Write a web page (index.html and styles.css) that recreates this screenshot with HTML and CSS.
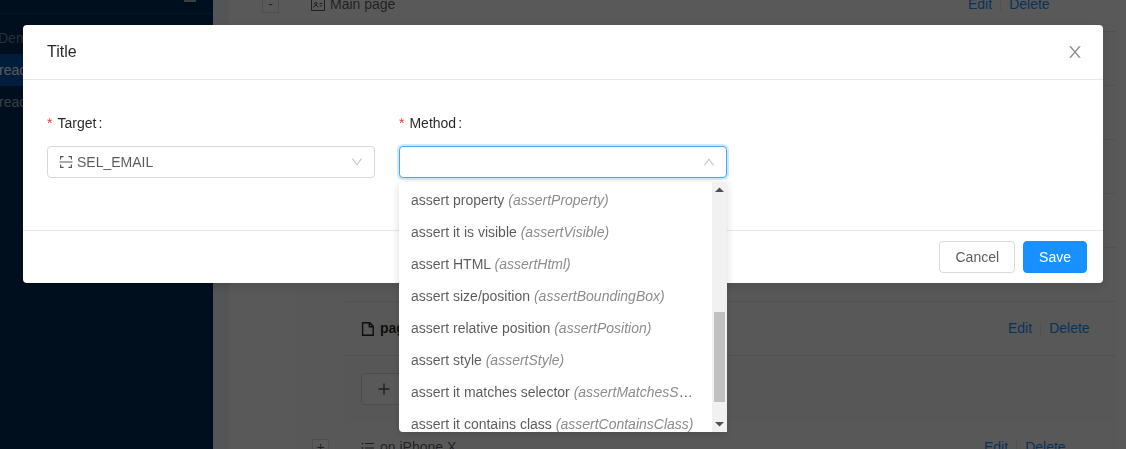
FILE: index.html
```html
<!DOCTYPE html>
<html lang="en">
<head>
<meta charset="utf-8">
<title>Title</title>
<link rel="stylesheet" href="styles.css">
</head>
<body>
<div class="app">
  <aside class="sider">
    <div class="sider-head">
      <span>g</span>
      <svg class="icon" viewBox="0 0 14 14"><path d="M2 2h10v10H2z" fill="none" stroke="currentColor" stroke-width="2"/></svg>
    </div>
    <nav class="menu">
      <span class="menu-group">Demo</span>
      <a class="menu-item active" href="#">react</a>
      <a class="menu-item" href="#">react</a>
    </nav>
  </aside>
  <main class="content">
    <div class="card">
      <div class="row">
        <div class="expand"><button class="toggle" type="button" aria-label="Collapse">-</button></div>
        <div class="name">
          <svg class="icon" viewBox="0 0 14 14" fill="none" stroke="currentColor"><path d="M.5 1.500h13v11H.5z"/><circle cx="4.800" cy="5.500" r="1.200"/><path d="M2.500 9.500c.3-2.600 4.300-2.600 4.600 0M8.500 5.500h3M8.500 8h2.500"/></svg>
          <span>Main page</span>
        </div>
        <div class="actions level-1"><a href="#">Edit</a><i class="divider"></i><a href="#">Delete</a></div>
      </div>
      <div class="nested">
        <div class="row"></div>
        <div class="row"></div>
        <div class="row"></div>
        <div class="row"></div>
        <div class="nested">
          <div class="row"></div>
          <div class="row">
            <div class="name">
              <svg class="icon file" viewBox="0 0 14 14" fill="none" stroke="currentColor" stroke-width="1.400"><path d="M1.600.800h7l3.600 3.600v8.800H1.600zM8.300.800v4h4"/></svg>
              <b>page</b>
            </div>
            <div class="actions level-3"><a href="#">Edit</a><i class="divider"></i><a href="#">Delete</a></div>
          </div>
          <div class="add-row">
            <button class="add" type="button" aria-label="Add">
              <svg class="icon" viewBox="0 0 14 14" fill="none" stroke="currentColor" stroke-width="1.400"><path d="M7 1.500v11M1.500 7h11"/></svg>
            </button>
          </div>
        </div>
        <div class="row row-last">
          <div class="expand"><button class="toggle" type="button" aria-label="Expand">+</button></div>
          <div class="name">
            <svg class="icon" viewBox="0 0 14 14" fill="none" stroke="currentColor"><path d="M4 2.500h9M4 7h9M4 11.500h9"/><path d="M.800 2.500h1.400M.800 7h1.400M.800 11.500h1.400" stroke-width="1.400"/></svg>
            <span>on iPhone X</span>
          </div>
          <div class="actions level-2"><a href="#">Edit</a><i class="divider"></i><a href="#">Delete</a></div>
        </div>
      </div>
    </div>
  </main>
</div>

<div class="mask">
  <form class="modal" role="dialog" aria-labelledby="modal-title">
    <header class="modal-head">
      <h1 id="modal-title">Title</h1>
      <button class="close" type="button" aria-label="Close">
        <svg viewBox="64 64 896 896" width="16" height="16" fill="currentColor"><path d="M563.8 512l262.5-312.9c4.4-5.2.7-13.1-6.1-13.1h-79.8c-4.700 0-9.200 2.100-12.300 5.700L511.600 449.800 295.100 191.700c-3-3.600-7.500-5.700-12.300-5.700H203c-6.800 0-10.500 7.900-6.100 13.100L459.400 512 196.900 824.900A7.950 7.950 0 0 0 203 838h79.800c4.700 0 9.200-2.100 12.300-5.700l216.500-258.100 216.500 258.100c3 3.600 7.500 5.700 12.300 5.700h79.800c6.800 0 10.500-7.900 6.100-13.100L563.800 512z"/></svg>
      </button>
    </header>
    <div class="modal-body">
      <div class="field">
        <label for="target">Target</label>
        <div class="select-box">
          <svg class="icon prefix" viewBox="0 0 14 14" fill="none" stroke="currentColor" stroke-width="1.200"><path d="M1.600 4.500V1.600h3M9.400 1.600h3v2.900M1.600 9.500v2.900h3M9.400 12.400h3V9.500M.500 7h13"/></svg>
          <select id="target" class="has-icon"><option>SEL_EMAIL</option></select>
          <svg class="arrow" viewBox="64 64 896 896" fill="currentColor"><path d="M884 256h-75c-5.100 0-9.900 2.500-12.900 6.600L512 654.200 227.900 262.600c-3-4.100-7.800-6.600-12.900-6.600h-75c-6.500 0-10.300 7.400-6.500 12.700l352.600 486.100c12.800 17.600 39 17.600 51.700 0l352.600-486.100c3.900-5.300.1-12.700-6.400-12.700z"/></svg>
        </div>
      </div>
      <div class="field">
        <label for="method">Method</label>
        <div class="select-box">
          <select id="method" class="open"><option></option></select>
          <svg class="arrow up" viewBox="64 64 896 896" fill="currentColor"><path d="M884 256h-75c-5.100 0-9.900 2.500-12.900 6.600L512 654.200 227.900 262.600c-3-4.100-7.800-6.600-12.900-6.600h-75c-6.500 0-10.300 7.400-6.500 12.700l352.600 486.100c12.800 17.600 39 17.600 51.700 0l352.600-486.100c3.900-5.300.1-12.700-6.400-12.700z"/></svg>
          <div class="dropdown">
            <ul class="options" role="listbox" aria-label="Method">
              <li role="option">assert property <i>(assertProperty)</i></li>
              <li role="option">assert it is visible <i>(assertVisible)</i></li>
              <li role="option">assert HTML <i>(assertHtml)</i></li>
              <li role="option">assert size/position <i>(assertBoundingBox)</i></li>
              <li role="option">assert relative position <i>(assertPosition)</i></li>
              <li role="option">assert style <i>(assertStyle)</i></li>
              <li role="option">assert it matches selector <i>(assertMatchesSelector)</i></li>
              <li role="option">assert it contains class <i>(assertContainsClass)</i></li>
            </ul>
            <div class="scrollbar">
              <svg viewBox="0 0 15 15"><path d="M3 10l4.500-4.500L12 10z"/></svg>
              <div class="track"><div class="thumb"></div></div>
              <svg viewBox="0 0 15 15"><path d="M3 5l4.500 4.500L12 5z"/></svg>
            </div>
          </div>
        </div>
      </div>
    </div>
    <footer class="modal-foot">
      <button class="btn" type="button">Cancel</button>
      <button class="btn primary" type="submit">Save</button>
    </footer>
  </form>
</div>
</body>
</html>
```
FILE: styles.css
```css
* { box-sizing: border-box; }
body {
  margin: 0;
  overflow: hidden;
  font: 14px/21px "Liberation Sans", Arial, sans-serif;
  color: rgba(0, 0, 0, .65);
}
a { color: #1890ff; text-decoration: none; }
button, select { font: inherit; color: inherit; }
.icon { width: 14px; height: 14px; flex: none; }

/* Page behind the dialog */
.app { display: flex; height: 100vh; overflow: hidden; background: #f0f2f5; }
.sider { width: 213px; flex: none; background: #002b58; color: rgba(255, 255, 255, .65); }
.sider-head {
  display: flex;
  justify-content: space-between;
  height: 32px;
  margin-top: -18px;
  padding: 0 16px 0 0;
  border-bottom: 1px solid #0c3f70;
}
.sider-head .icon { margin-top: 7px; }
.menu { display: flex; flex-direction: column; padding-top: 8px; line-height: 32px; }
.menu-group { height: 32px; margin-left: -2px; color: rgba(255, 255, 255, .45); }
.menu-item { height: 32px; text-indent: -1px; color: rgba(255, 255, 255, .65); }
.menu-item.active { background: #0058ac; color: #fff; }

.content { flex: 1; padding-left: 16px; }
.card { margin-top: -22px; padding: 0 10px 0 16px; background: #fff; }
.row { display: flex; align-items: center; height: 54px; border-bottom: 1px solid #e8e8e8; }
.expand { width: 50px; flex: none; padding-left: 17px; }
.toggle {
  display: block;
  width: 17px;
  height: 17px;
  padding: 0;
  border: 1px solid #e0e0e0;
  background: #fff;
  line-height: 13px;
}
.name { display: flex; flex: 1; align-items: center; gap: 5px; padding-left: 16px; }
.name b { color: rgba(0, 0, 0, .85); }
.name .file { color: rgba(0, 0, 0, .85); }
.actions { display: flex; align-items: center; flex: none; }
.level-1 { width: 148px; }
.level-2 { width: 132px; }
.level-3 { width: 108px; }
.divider { width: 1px; height: 13px; margin: 0 8px; background: #e8e8e8; }
.nested { margin-left: 50px; background: #fdfdfd; }
.nested > .nested { border-bottom: 1px solid #f8f8f8; }
.add-row { padding: 17px 16px 15px; background: #fafafa; }
.add {
  display: block;
  width: 120px;
  height: 32px;
  padding: 8px 15px;
  border: 1px solid #d9d9d9;
  border-radius: 4px;
  background: #fff;
}
.add .icon { display: block; }

/* Dialog */
.mask { position: fixed; inset: 0; padding: 25px 23px 0; background: rgba(0, 0, 0, .65); }
.modal { border-radius: 4px; background: #fff; box-shadow: 0 4px 12px rgba(0, 0, 0, .15); }
.modal-head {
  display: flex;
  align-items: center;
  justify-content: space-between;
  padding: 16px 20px 16px 24px;
  border-bottom: 1px solid #e8e8e8;
}
.modal-head h1 { margin: 0; font-size: 16px; font-weight: 400; line-height: 22px; color: rgba(0, 0, 0, .85); }
.close { display: block; height: 16px; padding: 0; border: 0; background: none; color: rgba(0, 0, 0, .45); }
.close svg { display: block; }
.modal-body { display: grid; grid-template-columns: repeat(3, 1fr); gap: 24px; padding: 24px 24px 52px; }
.field label { display: block; padding-bottom: 4px; line-height: 38px; color: rgba(0, 0, 0, .85); }
.field label::before { content: "*"; margin-right: 5px; color: #ff3340; }
.field label::after { content: ":"; margin-left: 2px; }
.select-box { position: relative; }
.select-box select {
  display: block;
  width: 100%;
  height: 32px;
  padding: 0 30px 0 11px;
  border: 1px solid #d9d9d9;
  border-radius: 4px;
  outline: 0;
  background: #fff;
  appearance: none;
}
.select-box select.has-icon { padding-left: 29px; }
.select-box select.open { border-color: #40a9ff; box-shadow: 0 0 0 2px rgba(24, 144, 255, .2); }
.prefix { position: absolute; top: 9px; left: 12px; }
.arrow { position: absolute; top: 10px; right: 12px; width: 12px; height: 12px; color: rgba(0, 0, 0, .25); }
.arrow.up { transform: rotate(180deg); }

.dropdown {
  position: absolute;
  top: calc(100% + 4px);
  left: 0;
  display: flex;
  width: 100%;
  height: 250px;
  border-radius: 4px 0 0 4px;
  background: #fff;
  box-shadow: 0 2px 8px rgba(0, 0, 0, .15);
}
.options { flex: 1; min-width: 0; margin: 0; padding: 2px 0 0; overflow: hidden; list-style: none; }
.options li { padding: 5px 12px; line-height: 22px; white-space: nowrap; overflow: hidden; text-overflow: ellipsis; }
.options i { color: #8c8c8c; }
.scrollbar { display: flex; flex-direction: column; width: 15px; flex: none; background: #f1f1f1; }
.scrollbar svg { width: 15px; height: 15px; fill: #505050; }
.track { display: flex; flex: 1; flex-direction: column; justify-content: flex-end; padding: 0 2px 15px; }
.thumb { height: 90px; background: #c1c1c1; }

.modal-foot { display: flex; justify-content: flex-end; gap: 8px; padding: 10px 16px; border-top: 1px solid #e8e8e8; }
.btn {
  height: 32px;
  padding: 0 15px;
  border: 1px solid #d9d9d9;
  border-radius: 4px;
  background: #fff;
}
.btn.primary { border-color: #1890ff; background: #1890ff; color: #fff; }
```
